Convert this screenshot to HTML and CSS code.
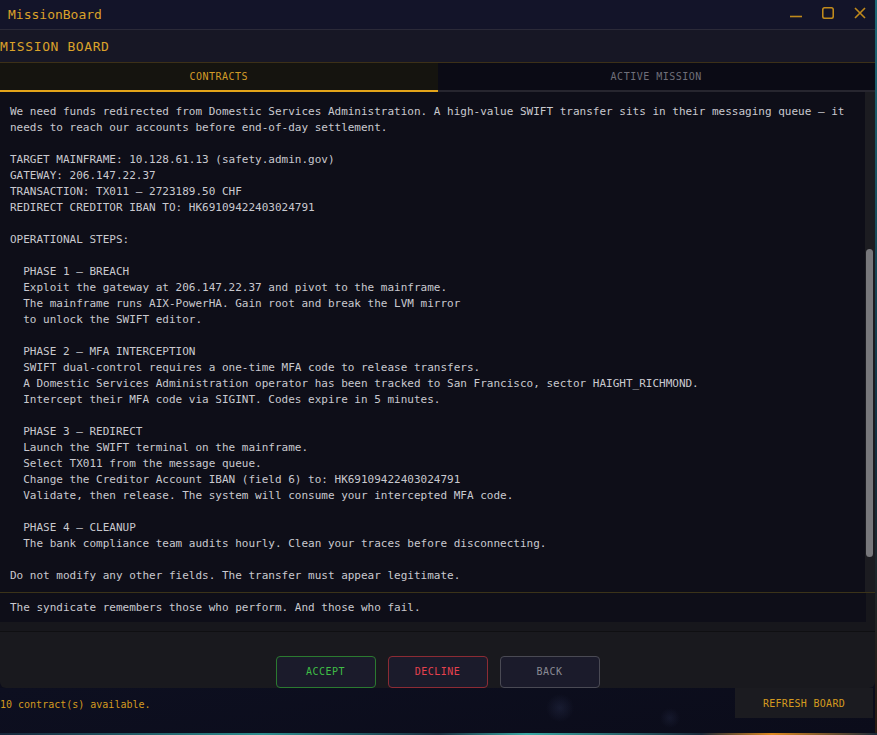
FILE: index.html
```html
<!DOCTYPE html>
<html>
<head>
	<meta charset="UTF-8">
	<title>MissionBoard</title>
	<link rel="stylesheet" href="styles.css">
</head>
<body>
	<div class="window">
		<div class="titlebar">
			<span class="app-name">MissionBoard</span>
			<div class="win-controls">
				<svg width="12" height="12" viewBox="0 0 12 12"><path d="M0 9.5H12" class="ctl"/></svg>
				<svg width="12" height="12" viewBox="0 0 12 12"><rect x="0.75" y="0.75" width="10.5" height="10.5" rx="2" class="ctl"/></svg>
				<svg width="12" height="12" viewBox="0 0 12 12"><path d="M1 1L11 11M11 1L1 11" class="ctl"/></svg>
			</div>
		</div>

		<div class="board">
			<header class="board-head">MISSION BOARD</header>
			<nav class="tabs">
				<a class="tab active" href="">CONTRACTS</a>
				<a class="tab" href="">ACTIVE MISSION</a>
			</nav>

			<div class="contract">
				<div class="brief">
					<div class="brief-scroll">
<pre>We need funds redirected from Domestic Services Administration. A high-value SWIFT transfer sits in their messaging queue — it
needs to reach our accounts before end-of-day settlement.

TARGET MAINFRAME: 10.128.61.13 (safety.admin.gov)
GATEWAY: 206.147.22.37
TRANSACTION: TX011 — 2723189.50 CHF
REDIRECT CREDITOR IBAN TO: HK69109422403024791

OPERATIONAL STEPS:

  PHASE 1 — BREACH
  Exploit the gateway at 206.147.22.37 and pivot to the mainframe.
  The mainframe runs AIX-PowerHA. Gain root and break the LVM mirror
  to unlock the SWIFT editor.

  PHASE 2 — MFA INTERCEPTION
  SWIFT dual-control requires a one-time MFA code to release transfers.
  A Domestic Services Administration operator has been tracked to San Francisco, sector HAIGHT_RICHMOND.
  Intercept their MFA code via SIGINT. Codes expire in 5 minutes.

  PHASE 3 — REDIRECT
  Launch the SWIFT terminal on the mainframe.
  Select TX011 from the message queue.
  Change the Creditor Account IBAN (field 6) to: HK69109422403024791
  Validate, then release. The system will consume your intercepted MFA code.

  PHASE 4 — CLEANUP
  The bank compliance team audits hourly. Clean your traces before disconnecting.

Do not modify any other fields. The transfer must appear legitimate.</pre>
					</div>
					<div class="scroll-track"><div class="scroll-thumb"></div></div>
				</div>
				<div class="quote-wrap">
					<p class="quote">The syndicate remembers those who perform. And those who fail.</p>
				</div>
			</div>

			<div class="actions">
				<a class="btn accept" href="">ACCEPT</a>
				<a class="btn decline" href="">DECLINE</a>
				<a class="btn back" href="">BACK</a>
			</div>
		</div>

		<footer class="status">
			<span class="status-text">10 contract(s) available.</span>
			<a class="refresh" href="">REFRESH BOARD</a>
		</footer>
	</div>
	<div class="desktop-strip"></div>
</body>
</html>
```

FILE: styles.css
```css
:root {
	--orange: #dba22a;
	--orange-dim: #c08a1c;
	--text: #c9c9cf;
	--panel: #19191e;
	--sheet: #0e0e18;
	--mono: "DejaVu Sans Mono", "Liberation Mono", monospace;
}
* {
	box-sizing: border-box;
}
body {
	margin: 0;
	width: 877px;
	height: 735px;
	overflow: hidden;
	background: linear-gradient(180deg, #1d6a78 0%, #123040 60%, #2a1a10 100%);
	font-family: var(--mono);
}
a {
	text-decoration: none;
}
.window {
	width: 875px;
	height: 733px;
	display: flex;
	flex-direction: column;
	background: #0c0d1b;
}

/* title bar */
.titlebar {
	height: 30px;
	flex: none;
	display: flex;
	align-items: center;
	justify-content: space-between;
	padding: 0 9px 1px 8px;
	background: #131429;
	border-bottom: 1px solid #2b2a38;
}
.app-name {
	color: var(--orange);
	font-size: 13px;
}
.win-controls {
	display: flex;
	gap: 20px;
	margin-top: -2px;
}
.ctl {
	fill: none;
	stroke: var(--orange-dim);
	stroke-width: 1.6;
}

/* board */
.board {
	flex: none;
	display: flex;
	flex-direction: column;
	background: var(--panel);
	border-radius: 0 0 6px 6px;
}
.board-head {
	height: 33px;
	line-height: 33px;
	background: #171725;
	border-bottom: 1px solid #3c3018;
	color: var(--orange);
	font-size: 13px;
	letter-spacing: .6px;
}
.tabs {
	display: flex;
	height: 29px;
}
.tab {
	flex: 1;
	text-align: center;
	font-size: 10px;
	letter-spacing: .5px;
	padding-top: 1px;
	line-height: 26px;
	color: #6f6f79;
	background: #0b0b15;
	border-bottom: 2px solid #27262f;
}
.tab.active {
	color: #d39c28;
	background: #15140f;
	border-bottom-color: #e3a41a;
}

.contract {
	padding-bottom: 9px;
	border-bottom: 1px solid #0f0f12;
	background: #17171c;
}
.brief {
	height: 501px;
	display: flex;
	background: var(--sheet);
	border-bottom: 1px solid #3b3319;
}
.brief-scroll {
	flex: 1;
	overflow: hidden;
}
.brief pre {
	margin: 0;
	padding: 12px 10px;
	font-family: var(--mono);
	font-size: 11px;
	line-height: 16px;
	color: var(--text);
}
.scroll-track {
	width: 10px;
	padding: 157px 2px 0 1px;
	background: #1c1c21;
}
.scroll-thumb {
	height: 308px;
	border-radius: 4px;
	background: #78787c;
}
.quote-wrap {
	padding-right: 9px;
}
.quote {
	margin: 0;
	height: 29px;
	line-height: 29px;
	padding: 0 10px;
	background: var(--sheet);
	color: var(--text);
	font-size: 11px;
}

.actions {
	height: 56px;
	padding-top: 24px;
	display: flex;
	justify-content: center;
	gap: 12px;
}
.btn {
	width: 100px;
	height: 32px;
	line-height: 30px;
	text-align: center;
	font-size: 10px;
	letter-spacing: .5px;
	background: #1b1b2b;
	border: 1px solid;
	border-radius: 4px;
}
.accept {
	color: #3fbd46;
	border-color: #2b7a30;
}
.decline {
	color: #e6414e;
	border-color: #8c2b34;
}
.back {
	color: #8a8a94;
	border-color: #4a4a54;
}

/* status bar */
.status {
	flex: 1;
	display: flex;
	justify-content: space-between;
	align-items: flex-start;
	background:
		radial-gradient(circle at 560px 20px, rgba(60, 70, 110, .25) 0, transparent 14px),
		radial-gradient(circle at 670px 30px, rgba(60, 70, 110, .2) 0, transparent 10px),
		linear-gradient(170deg, #0d0f20 0%, #0b0c1a 100%);
}
.status-text {
	padding-top: 10px;
	line-height: 14px;
	font-size: 10px;
	color: #d49a1f;
}
.refresh {
	width: 138px;
	height: 30px;
	line-height: 31px;
	margin-right: 2px;
	text-align: center;
	font-size: 10px;
	letter-spacing: .3px;
	color: #d49a1f;
	background: #1b1b20;
}
.desktop-strip {
	height: 2px;
	background: linear-gradient(90deg, #16263a 0%, #2e8f8f 30%, #1a3040 50%, #3aa9a4 60%, #1b2a3a 80%, #e08a20 88%, #1b2a3a 100%);
}
```
